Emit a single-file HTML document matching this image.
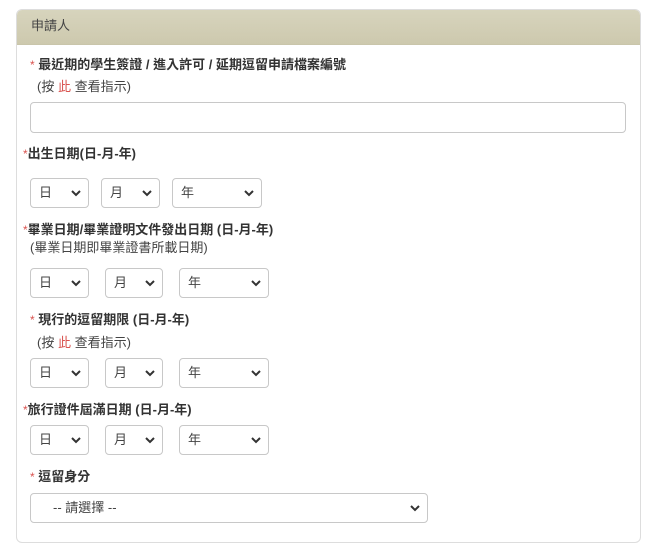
<!DOCTYPE html>
<html><head><meta charset="utf-8"><style>
body{margin:0;width:650px;height:554px;background:#fff;font-family:"Liberation Sans","Noto Sans CJK TC",sans-serif;color:#333;position:relative;overflow:hidden}
.panel{position:absolute;left:16px;top:9px;width:623px;height:532px;border:1px solid #ddd;border-radius:6px;overflow:hidden}
.hd{height:34px;background:linear-gradient(#d7d4bd,#cdc9ae);border-bottom:1px solid #c9c5aa;font-size:13px;line-height:32px;padding-left:14px;color:#444}
.a{position:absolute;font-size:13px;font-weight:bold;color:#333;white-space:nowrap;line-height:16px}
.n{position:absolute;font-size:13px;color:#444;white-space:nowrap;line-height:16px}
.r{color:#d9534f;font-weight:normal;font-size:12px;vertical-align:top}
.red{color:#d9534f}
.s{position:absolute;border:1px solid #c8c8c8;border-radius:4px;box-sizing:border-box;height:30px;font-size:13px;color:#444;line-height:28px;padding-left:8px;background:#fff}
.s svg{position:absolute;right:7px;top:11px}
.in{position:absolute;left:30px;top:102px;width:596px;height:31px;border:1px solid #c8c8c8;border-radius:4px;box-sizing:border-box}
</style></head><body>
<div class="panel"><div class="hd">申請人</div></div>
<div class="a" style="left:30px;top:57px"><span class="r">*</span> 最近期的學生簽證 / 進入許可 / 延期逗留申請檔案編號</div>
<div class="n" style="left:37px;top:79px">(按 <span class="red">此</span> 查看指示)</div>
<div class="in"></div>
<div class="a" style="left:23px;top:146px"><span class="r">*</span>出生日期(日-月-年)</div>
<div class="a" style="left:23px;top:222px"><span class="r">*</span>畢業日期/畢業證明文件發出日期 (日-月-年)</div>
<div class="n" style="left:30px;top:240px">(畢業日期即畢業證書所載日期)</div>
<div class="a" style="left:30px;top:312px"><span class="r">*</span> 現行的逗留期限 (日-月-年)</div>
<div class="n" style="left:37px;top:335px">(按 <span class="red">此</span> 查看指示)</div>
<div class="a" style="left:23px;top:402px"><span class="r">*</span>旅行證件屆滿日期 (日-月-年)</div>
<div class="a" style="left:30px;top:469px"><span class="r">*</span> 逗留身分</div>

<div class="s" style="left:30px;top:178px;width:59px">日<svg width="10" height="7"><path d="M1 1l4 4 4-4" stroke="#333" stroke-width="2" fill="none"/></svg></div>
<div class="s" style="left:101px;top:178px;width:59px">月<svg width="10" height="7"><path d="M1 1l4 4 4-4" stroke="#333" stroke-width="2" fill="none"/></svg></div>
<div class="s" style="left:172px;top:178px;width:90px">年<svg width="10" height="7"><path d="M1 1l4 4 4-4" stroke="#333" stroke-width="2" fill="none"/></svg></div>

<div class="s" style="left:30px;top:268px;width:59px">日<svg width="10" height="7"><path d="M1 1l4 4 4-4" stroke="#333" stroke-width="2" fill="none"/></svg></div>
<div class="s" style="left:105px;top:268px;width:58px">月<svg width="10" height="7"><path d="M1 1l4 4 4-4" stroke="#333" stroke-width="2" fill="none"/></svg></div>
<div class="s" style="left:179px;top:268px;width:90px">年<svg width="10" height="7"><path d="M1 1l4 4 4-4" stroke="#333" stroke-width="2" fill="none"/></svg></div>

<div class="s" style="left:30px;top:358px;width:59px">日<svg width="10" height="7"><path d="M1 1l4 4 4-4" stroke="#333" stroke-width="2" fill="none"/></svg></div>
<div class="s" style="left:105px;top:358px;width:58px">月<svg width="10" height="7"><path d="M1 1l4 4 4-4" stroke="#333" stroke-width="2" fill="none"/></svg></div>
<div class="s" style="left:179px;top:358px;width:90px">年<svg width="10" height="7"><path d="M1 1l4 4 4-4" stroke="#333" stroke-width="2" fill="none"/></svg></div>

<div class="s" style="left:30px;top:425px;width:59px">日<svg width="10" height="7"><path d="M1 1l4 4 4-4" stroke="#333" stroke-width="2" fill="none"/></svg></div>
<div class="s" style="left:105px;top:425px;width:58px">月<svg width="10" height="7"><path d="M1 1l4 4 4-4" stroke="#333" stroke-width="2" fill="none"/></svg></div>
<div class="s" style="left:179px;top:425px;width:90px">年<svg width="10" height="7"><path d="M1 1l4 4 4-4" stroke="#333" stroke-width="2" fill="none"/></svg></div>

<div class="s" style="left:30px;top:493px;width:398px;padding-left:22px">-- 請選擇 --<svg width="10" height="7"><path d="M1 1l4 4 4-4" stroke="#333" stroke-width="2" fill="none"/></svg></div>
</body></html>
